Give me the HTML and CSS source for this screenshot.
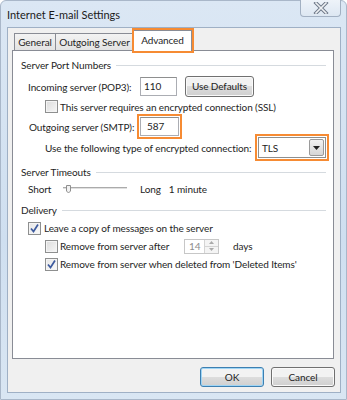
FILE: index.html
```html
<!DOCTYPE html>
<html lang="en">
<head>
  <meta charset="UTF-8" />
  <title>Internet E-mail Settings</title>
  <link rel="stylesheet" href="styles.css">
</head>
<body>
  <div class="window">
    <div class="titlebar">
      <div class="title">Internet E-mail Settings</div>
      <div class="close">
        <svg width="18" height="12" viewBox="0 0 18 12">
          <path d="M4 1 L14 11 M14 1 L4 11" stroke="#6f7a8a" stroke-width="3.6" stroke-linecap="square" fill="none"/>
          <path d="M4 1 L14 11 M14 1 L4 11" stroke="#eef0f3" stroke-width="1.6" stroke-linecap="square" fill="none"/>
        </svg>
      </div>
    </div>

    <div class="client">
      <div class="tabs">
        <div class="tab tab-general">General</div>
        <div class="tab tab-outgoing">Outgoing Server</div>
        <div class="tab tab-active mark">Advanced</div>
      </div>

      <div class="panel">
        <div class="group">
          <span>Server Port Numbers</span><div class="rule"></div>
        </div>

        <div class="row row-incoming">
          <label class="field-label">Incoming server (POP3):</label>
          <div class="textbox">110</div>
          <div class="button btn-defaults">Use Defaults</div>
        </div>

        <div class="row row-ssl indent">
          <span class="checkbox"></span>
          <span>This server requires an encrypted connection (SSL)</span>
        </div>

        <div class="row row-smtp">
          <label class="field-label smtp-label">Outgoing server (SMTP):</label>
          <div class="textbox textbox-smtp mark">587</div>
        </div>

        <div class="row row-enc indent">
          <span class="enc-label">Use the following type of encrypted connection:</span>
          <div class="select mark">
            <span class="select-value">TLS</span>
            <span class="select-btn">
              <svg width="7" height="4" viewBox="0 0 7 4"><path d="M0 0 H7 L3.5 4 Z" fill="#222"/></svg>
            </span>
          </div>
        </div>

        <div class="group group-timeouts">
          <span>Server Timeouts</span><div class="rule"></div>
        </div>

        <div class="row row-short">
          <span class="short">Short</span>
          <svg class="slider" width="64" height="10" viewBox="0 0 64 10">
            <rect x="0" y="2" width="64" height="2" fill="#e0e0e0"/>
            <rect x="0" y="2" width="64" height="1" fill="#ababab"/>
            <path d="M3.5 0.5 H7.5 V6 L5.5 8 L3.5 6 Z" fill="#f2f2f2" stroke="#8f8f8f"/>
          </svg>
          <span class="long">Long</span>
          <span>1 minute</span>
        </div>

        <div class="group group-delivery">
          <span>Delivery</span><div class="rule"></div>
        </div>

        <div class="row row-leave">
          <span class="checkbox checked">
            <svg width="11" height="11" viewBox="0 0 11 11"><path d="M2 5.5 L4.5 8.5 L9 1.5" stroke="#3d5a9e" stroke-width="1.7" fill="none"/></svg>
          </span>
          <span class="leave-text">Leave a copy of messages on the server</span>
        </div>

        <div class="row row-after indent">
          <span class="checkbox"></span>
          <span class="after-text">Remove from server after</span>
          <div class="spinner">
            <span class="spin-value">14</span>
            <span class="spin-btns">
              <span class="spin-btn"><svg width="5" height="3" viewBox="0 0 5 3"><path d="M0 3 H5 L2.5 0 Z" fill="#a9a9a9"/></svg></span>
              <span class="spin-btn"><svg width="5" height="3" viewBox="0 0 5 3"><path d="M0 0 H5 L2.5 3 Z" fill="#a9a9a9"/></svg></span>
            </span>
          </div>
          <span class="days">days</span>
        </div>

        <div class="row row-deleted indent">
          <span class="checkbox checked">
            <svg width="11" height="11" viewBox="0 0 11 11"><path d="M2 5.5 L4.5 8.5 L9 1.5" stroke="#3d5a9e" stroke-width="1.7" fill="none"/></svg>
          </span>
          <span>Remove from server when deleted from 'Deleted Items'</span>
        </div>
      </div>

      <div class="footer">
        <div class="button btn-ok">OK</div>
        <div class="button btn-cancel">Cancel</div>
      </div>
    </div>
  </div>
</body>
</html>
```

FILE: styles.css
```css
body {
  margin: 0;
  font-family: Lato, 'Open Sans', sans-serif;
  font-size: 10px;
  letter-spacing: -0.1px;
  color: #1e1e1e;
  background: #ffffff;
  white-space: nowrap;
}

.window {
  width: 347px;
  height: 400px;
  box-sizing: border-box;
  border: 1px solid #a9b7c9;
  border-radius: 6px 6px 0 0;
  background: linear-gradient(#dbe7f4, #cfdff0 60%, #d9e6f3);
  display: flex;
  flex-direction: column;
}

.titlebar {
  height: 26px;
  display: flex;
  justify-content: space-between;
  align-items: flex-start;
}

.title {
  font-size: 11px;
  letter-spacing: 0;
  margin: 7px 0 0 6px;
  color: #1a1a1a;
}

.close {
  width: 41px;
  height: 17px;
  margin-right: 5px;
  margin-top: -1px;
  box-sizing: border-box;
  border: 1px solid #a2b0c2;
  border-top: none;
  border-radius: 0 0 4px 4px;
  background: linear-gradient(#eef3f9, #dde7f2);
  display: flex;
  align-items: center;
  justify-content: center;
}

.client {
  margin-left: 6px;
  width: 334px;
  height: 366px;
  box-sizing: border-box;
  border: 1px solid #9fb0c5;
  background: #f0f0f0;
  padding: 0 6px 0 4px;
  display: flex;
  flex-direction: column;
}

.tabs {
  height: 22px;
  display: flex;
  align-items: flex-end;
  padding-left: 2px;
}

.tab {
  height: 17px;
  box-sizing: border-box;
  border: 1px solid #898c95;
  border-bottom: none;
  background: linear-gradient(#f3f3f3, #e3e3e3);
  text-align: center;
  line-height: 16px;
}

.tab-general {
  width: 42px;
}

.tab-outgoing {
  width: 78px;
  border-left: none;
}

.tab-active {
  width: 58px;
  height: 21px;
  margin-bottom: -1px;
  background: #ffffff;
  border-left: none;
  position: relative;
  line-height: 19px;
}

.mark {
  outline: 2px solid #f68b33;
  outline-offset: 1px;
}

.tab-active.mark {
  outline-offset: 0;
}

.panel {
  height: 309px;
  box-sizing: border-box;
  border: 1px solid #898c95;
  background: #ffffff;
  padding: 6px 7px 0 8px;
  display: flex;
  flex-direction: column;
}

.group {
  height: 16px;
  display: flex;
  align-items: center;
}

.rule {
  flex: 1;
  height: 1px;
  background: #d5dadf;
  margin-left: 5px;
}

.row {
  display: flex;
  align-items: center;
  padding-left: 7px;
}

.indent {
  padding-left: 24px;
}

.field-label {
  width: 112px;
}

.smtp-label {
  padding-left: 1px;
  width: 111px;
}

.enc-label {
  width: 205px;
}

.textbox {
  width: 37px;
  height: 19px;
  box-sizing: border-box;
  border: 1px solid #abadb3;
  border-top-color: #8e8f8f;
  background: #fff;
  padding-left: 3px;
  line-height: 17px;
}

.textbox-smtp {
  width: 39px;
  padding-left: 6px;
}

.button {
  height: 21px;
  box-sizing: border-box;
  border: 1px solid #707070;
  border-radius: 3px;
  background: linear-gradient(#f2f2f2 50%, #dddddd 50%, #cfcfcf);
  text-align: center;
  line-height: 19px;
  box-shadow: inset 0 0 0 1px #fafafa;
}

.btn-defaults {
  width: 69px;
  margin-left: 8px;
}

.row-incoming {
  height: 21px;
  margin-top: 3px;
}

.row-ssl {
  height: 15px;
  margin-top: 2px;
}

.row-smtp {
  height: 19px;
  margin-top: 3px;
}

.row-enc {
  height: 21px;
  margin-top: 1px;
}

.group-timeouts {
  margin-top: 6px;
}

.row-short {
  height: 16px;
  margin-top: 1px;
}

.group-delivery {
  margin-top: 5px;
}

.row-leave {
  height: 16px;
  margin-top: 2px;
}

.row-after {
  height: 16px;
  margin-top: 2px;
}

.row-deleted {
  height: 16px;
  margin-top: 2px;
}

.checkbox {
  width: 13px;
  height: 13px;
  flex-shrink: 0;
  box-sizing: border-box;
  border: 1px solid #8e8f8f;
  background: linear-gradient(135deg, #dcdcdc, #f6f6f6);
  box-shadow: inset 0 0 0 1px #f4f4f4;
  margin-right: 2px;
  display: flex;
  align-items: center;
  justify-content: center;
}

.checked {
  background: linear-gradient(135deg, #e6e6e6, #fafafa);
}

.select {
  width: 68px;
  height: 21px;
  box-sizing: border-box;
  border: 1px solid #8e8f8f;
  background: #fff;
  margin-left: 8px;
  display: flex;
  align-items: center;
}

.select-value {
  flex: 1;
  padding-left: 3px;
}

.select-btn {
  width: 15px;
  height: 17px;
  margin-right: 1px;
  box-sizing: border-box;
  border: 1px solid #9a9a9a;
  border-radius: 2px;
  background: linear-gradient(#f2f2f2, #d6d6d6);
  display: flex;
  align-items: center;
  justify-content: center;
}

.short {
  width: 35px;
}

.slider {
  margin-top: 1px;
}

.long {
  margin-left: 13px;
  margin-right: 8px;
}

.leave-text {
  margin-left: 1px;
}

.after-text {
  width: 124px;
}

.spinner {
  width: 35px;
  height: 15px;
  box-sizing: border-box;
  border: 1px solid #c7c7c7;
  display: flex;
  color: #8d8d8d;
}

.spin-value {
  flex: 1;
  padding-left: 4px;
  line-height: 13px;
}

.spin-btns {
  width: 13px;
  display: flex;
  flex-direction: column;
  border-left: 1px solid #d4d4d4;
}

.spin-btn {
  flex: 1;
  display: flex;
  align-items: center;
  justify-content: center;
  background: #f4f4f4;
}

.spin-btn + .spin-btn {
  border-top: 1px solid #d4d4d4;
}

.days {
  margin-left: 14px;
}

.footer {
  display: flex;
  justify-content: flex-end;
  gap: 7px;
  padding-top: 8px;
  margin-right: -1px;
}

.btn-ok {
  width: 64px;
  height: 20px;
  border-color: #3c7fb1;
  box-shadow: inset 0 0 0 1px #9fd5f5;
  line-height: 18px;
}

.btn-cancel {
  width: 64px;
  height: 20px;
  line-height: 18px;
}
```
